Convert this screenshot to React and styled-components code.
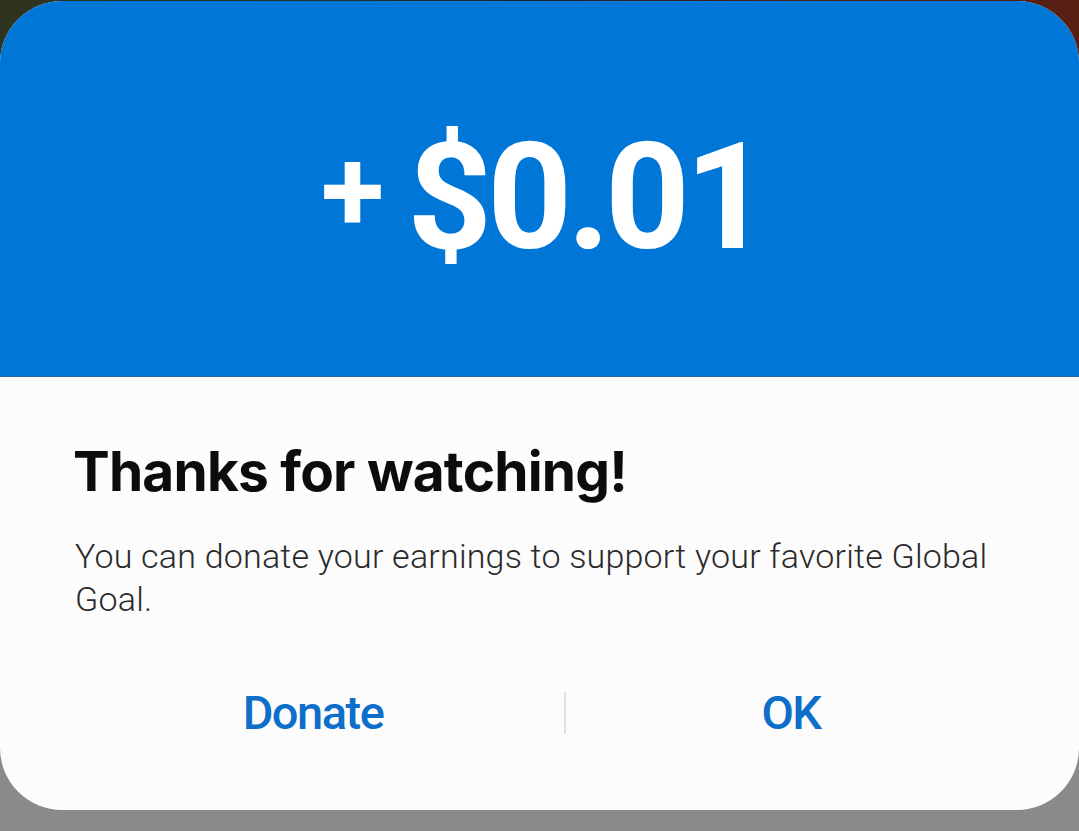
import React from 'react';
import styled, { createGlobalStyle } from 'styled-components';

const GlobalStyle = createGlobalStyle`
    html, body {
        margin: 0;
        padding: 0;
    }
    body {
        font-family: Roboto, "Noto Sans", sans-serif;
    }
`;

const Screen = styled.div`
    width: 1079px;
    height: 831px;
    overflow: hidden;
    background:
        linear-gradient(to bottom, transparent 0, transparent 50%, #8a8a8a 50%),
        linear-gradient(to right, #2f3420 0%, #24262a 50%, #5b1f12 100%);
    box-sizing: border-box;
    padding-top: 1px;
`;

const Dialog = styled.div`
    height: 809px;
    border-radius: 62px;
    overflow: hidden;
    background: #fcfcfc;
    display: flex;
    flex-direction: column;
`;

const Banner = styled.div`
    height: 376px;
    background: #0076d7;
    border-bottom: 1px solid #2c6aa3;
    display: flex;
    align-items: center;
    justify-content: center;
    color: #ffffff;
    padding: 18px 0 0 7px;
    box-sizing: border-box;
`;

const Plus = styled.span`
    font-family: Roboto, sans-serif;
    font-weight: 700;
    font-size: 116px;
    line-height: 1;
    margin-right: 23px;
    margin-top: -14px;
`;

const Amount = styled.span`
    font-family: Roboto, sans-serif;
    font-weight: 700;
    font-size: 148px;
    letter-spacing: -5px;
    line-height: 1;
`;

const Body = styled.div`
    flex: 1;
    display: flex;
    flex-direction: column;
    padding: 60px 75px 0 75px;
`;

const Title = styled.h1`
    margin: 0;
    margin-left: -2px;
    font-family: Inter, "Noto Sans", sans-serif;
    font-weight: 700;
    font-size: 55px;
    letter-spacing: -0.8px;
    line-height: 68px;
    color: #0c0c0c;
`;

const Message = styled.p`
    margin: 30px 0 0 0;
    max-width: 929px;
    font-family: Roboto, sans-serif;
    font-weight: 300;
    font-size: 34px;
    letter-spacing: 0.2px;
    line-height: 43px;
    color: #2a2a2a;
`;

const Actions = styled.div`
    margin-top: auto;
    margin-bottom: 70px;
    margin-left: -13px;
    margin-right: -12px;
    display: grid;
    grid-template-columns: 502px 2px 1fr;
    align-items: center;
`;

const ActionButton = styled.button`
    border: none;
    background: none;
    padding: 0;
    font-family: Roboto, sans-serif;
    font-weight: 500;
    font-size: 47px;
    letter-spacing: -1.5px;
    color: #0d6fca;
    text-align: center;
    cursor: pointer;
`;

const Divider = styled.div`
    width: 2px;
    height: 42px;
    background: #e0e0e0;
`;

export default function App() {
    return (
        <>
            <GlobalStyle />
            <Screen>
                <Dialog>
                    <Banner>
                        <Plus>+</Plus>
                        <Amount>$0.01</Amount>
                    </Banner>
                    <Body>
                        <Title>Thanks for watching!</Title>
                        <Message>
                            You can donate your earnings to support your favorite Global Goal.
                        </Message>
                        <Actions>
                            <ActionButton>Donate</ActionButton>
                            <Divider />
                            <ActionButton>OK</ActionButton>
                        </Actions>
                    </Body>
                </Dialog>
            </Screen>
        </>
    );
}
